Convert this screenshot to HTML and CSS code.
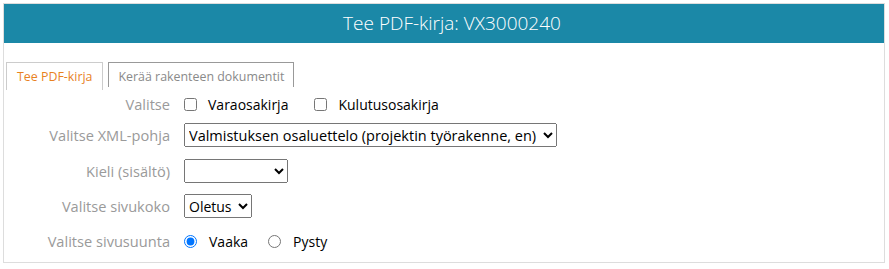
FILE: index.html
```html
<html>

<head>
    <title>Tee PDF-kirja</title>
    <link rel="stylesheet" href="styles.css">
</head>

<body>
    <div class="pdfPanel">
        <div class="pdfHeader">Tee PDF-kirja: VX3000240</div>

        <div class="tabBar">
            <div class="tab tabActive">Tee PDF-kirja</div>
            <div class="tab">Kerää rakenteen dokumentit</div>
        </div>

        <div class="pdfForm">
            <div class="formRow rowCheck">
                <div class="formLabel">Valitse</div>
                <div class="formField">
                    <label class="check"><input type="checkbox"> Varaosakirja</label>
                    <label class="check"><input type="checkbox"> Kulutusosakirja</label>
                </div>
            </div>

            <div class="formRow rowXml">
                <div class="formLabel">Valitse XML-pohja</div>
                <div class="formField">
                    <select class="selXml">
                        <option>Valmistuksen osaluettelo (projektin työrakenne, en)</option>
                    </select>
                </div>
            </div>

            <div class="formRow">
                <div class="formLabel">Kieli (sisältö)</div>
                <div class="formField">
                    <select class="selLang">
                        <option></option>
                    </select>
                </div>
            </div>

            <div class="formRow">
                <div class="formLabel">Valitse sivukoko</div>
                <div class="formField">
                    <select class="selSize">
                        <option>Oletus</option>
                    </select>
                </div>
            </div>

            <div class="formRow">
                <div class="formLabel">Valitse sivusuunta</div>
                <div class="formField radios">
                    <label class="check"><input type="radio" name="suunta" checked> Vaaka</label>
                    <label class="check"><input type="radio" name="suunta"> Pysty</label>
                </div>
            </div>
        </div>
    </div>
</body>

</html>
```

FILE: styles.css
```css
body {
    margin: 0;
    font-family: "Open Sans", "Noto Sans", Arial, sans-serif;
    background-color: white;
}

.pdfPanel {
    margin: 3px 4px 0 3px;
    border: 1px solid #dddddd;
    height: 260px;
    box-sizing: border-box;
}

.pdfHeader {
    background-color: #1b88a7;
    color: white;
    height: 39px;
    line-height: 38px;
    text-align: center;
    padding-left: 16px;
    font-size: 19px;
    font-weight: 300;
}

.tabBar {
    display: flex;
    padding: 19px 0 0 2px;
}

.tab {
    border: 1px solid #999999;
    border-bottom: none;
    color: #8a8a8a;
    font-size: 12.4px;
    white-space: nowrap;
    height: 24px;
    line-height: 28px;
    padding: 0 9px 0 10px;
    margin-right: 5px;
}

.tabActive {
    border-color: #cccccc;
    color: #e8821f;
    height: 27px;
}

.pdfForm {
    display: flex;
    flex-direction: column;
    font-size: 14px;
}

.formRow {
    display: grid;
    grid-template-columns: 166px auto;
    column-gap: 14px;
    height: 24px;
    margin-top: 11px;
}

.formRow.rowCheck {
    margin-top: 2px;
}

.formRow.rowXml {
    margin-top: 7px;
}

.formRow:nth-child(3) {
    margin-top: 12px;
}

.formLabel {
    color: #9a9a9a;
    font-size: 14.6px;
    display: flex;
    align-items: center;
    justify-content: flex-end;
}

.formField {
    display: flex;
    align-items: center;
    gap: 26px;
    color: black;
}

.formField.radios {
    gap: 20px;
}

.check {
    display: flex;
    align-items: center;
}

.check input {
    margin: 0 11px 0 0;
}

.radios .check input {
    margin: 0 12px 0 0;
}

select {
    font-family: "Open Sans", "Noto Sans", Arial, sans-serif;
    font-size: 14.5px;
    height: 24px;
    color: black;
}

.selXml {
    width: 373px;
}

.selLang {
    width: 104px;
}

.selSize {
    width: 68px;
    font-size: 14px;
}
```
